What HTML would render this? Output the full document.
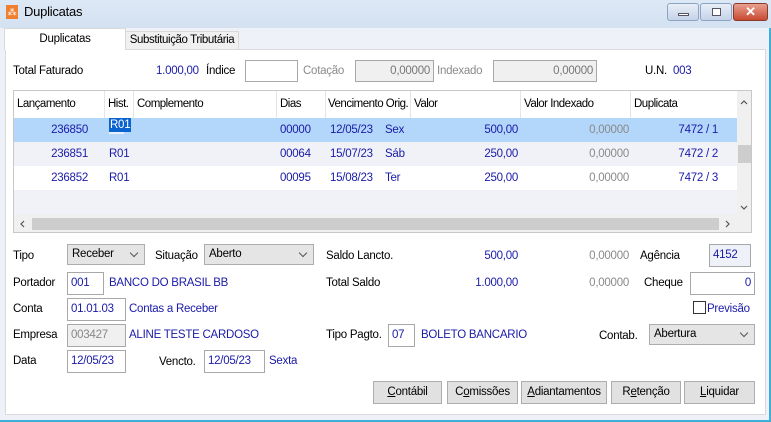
<!DOCTYPE html>
<html><head><meta charset="utf-8"><style>
*{margin:0;padding:0;box-sizing:border-box}
body{width:771px;height:422px;overflow:hidden;background:#eef2f8;font-family:"Liberation Sans",sans-serif;font-size:11.5px;letter-spacing:-0.25px;color:#000;position:relative}
.a{position:absolute;white-space:nowrap;line-height:14px}
.b{color:#1a1aa8}
.g{color:#8a8a8a}
.box{position:absolute;border:1px solid #a8a8a8;background:#fff;line-height:20px;padding:0 3px;color:#1a1aa8}
.gr{background:#f0f0f0}
.sel{position:absolute;border:1px solid #adadad;background:#e5e5e5;line-height:18px;padding:0 4px}
.sel::after{content:"";position:absolute;right:7px;top:5px;width:5px;height:5px;border-right:1px solid #555;border-bottom:1px solid #555;transform:rotate(45deg)}
.btn{position:absolute;top:381px;height:23px;border:1px solid #adadad;background:#e1e1e1;text-align:center;line-height:21px}
.r{text-align:right}
.hd{position:absolute;top:91px;height:27px;border-right:1px solid #e5e5e5;line-height:27px;padding-left:3px;letter-spacing:-0.5px;overflow:hidden}
</style></head><body>
<div class="a" style="left:0;top:0;width:771px;height:28px;background:linear-gradient(#dde8f5,#d3e1f1)"></div>
<div class="a" style="left:6px;top:5px;width:12px;height:14px;background:#f08030;color:#fff;font-size:9px;line-height:14px;text-align:center">⁂</div>
<div class="a" style="left:24px;top:5px;font-size:13px">Duplicatas</div>
<div class="a" style="left:667px;top:3px;width:32px;height:18px;border:1px solid #8da4c4;border-radius:3px;background:linear-gradient(#e8eef7,#c5d4e8)"><div style="position:absolute;left:10px;top:9px;width:11px;height:3px;background:#fff;border:1px solid #556"></div></div>
<div class="a" style="left:700px;top:3px;width:32px;height:18px;border:1px solid #8da4c4;border-radius:3px;background:linear-gradient(#e8eef7,#c5d4e8)"><div style="position:absolute;left:11px;top:4px;width:9px;height:8px;border:1px solid #556;background:#fff"></div></div>
<div class="a" style="left:733px;top:3px;width:35px;height:18px;border:1px solid #8a3a2a;border-radius:3px;background:linear-gradient(#e8a090,#c84a30);color:#fff;font-weight:bold;text-align:center;font-size:13px;line-height:16px">✕</div>
<div class="a" style="left:5px;top:49px;width:761px;height:366px;background:#fff;border:1px solid #d9d9d9"></div>
<div class="a" style="left:125px;top:31px;width:114px;height:19px;background:#f0f0f0;border:1px solid #d9d9d9;text-align:center;line-height:17px;letter-spacing:-0.4px">Substituição Tributária</div>
<div class="a" style="left:4px;top:28px;width:122px;height:22px;background:#fff;border:1px solid #d9d9d9;border-bottom:none;text-align:center;line-height:20px">Duplicatas</div>
<div class="a" style="left:13px;top:64px">Total Faturado</div>
<div class="a b" style="left:156px;top:64px">1.000,00</div>
<div class="a" style="left:206px;top:64px">Índice</div>
<div class="box" style="left:245px;top:60px;width:53px;height:22px"></div>
<div class="a g" style="left:303px;top:64px">Cotação</div>
<div class="box gr r" style="left:355px;top:60px;width:79px;height:22px;color:#777">0,00000</div>
<div class="a g" style="left:437px;top:64px">Indexado</div>
<div class="box gr r" style="left:493px;top:60px;width:104px;height:22px;color:#777">0,00000</div>
<div class="a" style="left:645px;top:64px">U.N.</div>
<div class="a b" style="left:673px;top:64px">003</div>
<div class="a" style="left:13px;top:90px;width:739px;height:143px;border:1px solid #c8c8c8;background:#fff"></div>
<div class="hd" style="left:14px;width:91px">Lançamento</div>
<div class="hd" style="left:105px;width:29px">Hist.</div>
<div class="hd" style="left:134px;width:143px">Complemento</div>
<div class="hd" style="left:277px;width:49px">Dias</div>
<div class="hd" style="left:326px;width:85px;padding-left:2px">Vencimento Orig.</div>
<div class="hd" style="left:411px;width:110px">Valor</div>
<div class="hd" style="left:521px;width:110px">Valor Indexado</div>
<div class="hd" style="left:631px;width:106px;border:none">Duplicata</div>
<div class="a" style="left:14px;top:118px;width:723px;height:24px;background:#b3d7fa"></div>
<div class="a" style="left:14px;top:142px;width:723px;height:24px;background:#f1f2f8"></div>
<div class="a" style="left:14px;top:190px;width:723px;height:24px;background:#f1f2f8"></div>
<div class="a" style="left:109px;top:118px;width:15px;height:16px;background:#e8f0fb"></div>
<div class="a" style="left:109px;top:118px;background:#0a64d0;color:#fff;padding:0 1px">R01</div>
<div class="a b" style="left:280px;top:123px">00000</div><div class="a b" style="left:330px;top:123px">12/05/23</div><div class="a b" style="left:385px;top:123px">Sex</div>
<div class="a b r" style="left:30px;width:58px;top:123px">236850</div><div class="a b r" style="left:430px;width:88px;top:123px">500,00</div><div class="a g r" style="left:540px;width:89px;top:123px">0,00000</div><div class="a b r" style="left:640px;width:78px;top:123px">7472 / 1</div>
<div class="a b r" style="left:30px;width:58px;top:147px">236851</div><div class="a b" style="left:109px;top:147px">R01</div><div class="a b" style="left:280px;top:147px">00064</div><div class="a b" style="left:330px;top:147px">15/07/23</div><div class="a b" style="left:385px;top:147px">Sáb</div><div class="a b r" style="left:430px;width:88px;top:147px">250,00</div><div class="a g r" style="left:540px;width:89px;top:147px">0,00000</div><div class="a b r" style="left:640px;width:78px;top:147px">7472 / 2</div>
<div class="a b r" style="left:30px;width:58px;top:171px">236852</div><div class="a b" style="left:109px;top:171px">R01</div><div class="a b" style="left:280px;top:171px">00095</div><div class="a b" style="left:330px;top:171px">15/08/23</div><div class="a b" style="left:385px;top:171px">Ter</div><div class="a b r" style="left:430px;width:88px;top:171px">250,00</div><div class="a g r" style="left:540px;width:89px;top:171px">0,00000</div><div class="a b r" style="left:640px;width:78px;top:171px">7472 / 3</div>
<div class="a" style="left:737px;top:91px;width:14px;height:123px;background:#f0f0f0"></div>
<div class="a" style="left:738px;top:145px;width:13px;height:18px;background:#cdcdcd"></div>
<svg class="a" style="left:739px;top:98px" width="10" height="8"><path d="M2 6 L5 3 L8 6" fill="none" stroke="#555" stroke-width="1.2"/></svg>
<svg class="a" style="left:739px;top:204px" width="10" height="8"><path d="M2 2 L5 5 L8 2" fill="none" stroke="#555" stroke-width="1.2"/></svg>
<div class="a" style="left:14px;top:214px;width:737px;height:18px;background:#f0f0f0"></div>
<div class="a" style="left:32px;top:218px;width:687px;height:12px;background:#cdcdcd"></div>
<svg class="a" style="left:18px;top:219px" width="8" height="10"><path d="M6 2 L3 5 L6 8" fill="none" stroke="#555" stroke-width="1.2"/></svg>
<svg class="a" style="left:724px;top:219px" width="8" height="10"><path d="M2 2 L5 5 L2 8" fill="none" stroke="#555" stroke-width="1.2"/></svg>
<div class="a" style="left:13px;top:249px">Tipo</div>
<div class="sel" style="left:67px;top:244px;width:78px;height:21px">Receber</div>
<div class="a" style="left:155px;top:249px">Situação</div>
<div class="sel" style="left:204px;top:244px;width:110px;height:21px">Aberto</div>
<div class="a" style="left:326px;top:249px">Saldo Lancto.</div>
<div class="a b r" style="left:430px;width:88px;top:249px">500,00</div>
<div class="a g r" style="left:540px;width:89px;top:249px">0,00000</div>
<div class="a" style="left:640px;top:249px">Agência</div>
<div class="box" style="left:709px;top:244px;width:42px;height:23px;background:#eef1f8;line-height:21px">4152</div>
<div class="a" style="left:13px;top:276px">Portador</div>
<div class="box" style="left:67px;top:272px;width:37px;height:23px">001</div>
<div class="a b" style="left:109px;top:276px">BANCO DO BRASIL BB</div>
<div class="a" style="left:326px;top:276px">Total Saldo</div>
<div class="a b r" style="left:430px;width:88px;top:276px">1.000,00</div>
<div class="a g r" style="left:540px;width:89px;top:276px">0,00000</div>
<div class="a" style="left:644px;top:276px">Cheque</div>
<div class="box r" style="left:690px;top:272px;width:65px;height:23px">0</div>
<div class="a" style="left:13px;top:302px">Conta</div>
<div class="box" style="left:67px;top:298px;width:59px;height:23px">01.01.03</div>
<div class="a b" style="left:129px;top:302px">Contas a Receber</div>
<div class="a" style="left:693px;top:301px;width:13px;height:13px;border:1px solid #333;background:#fff"></div>
<div class="a b" style="left:707px;top:302px">Previsão</div>
<div class="a" style="left:13px;top:328px">Empresa</div>
<div class="box gr" style="left:67px;top:324px;width:59px;height:23px;color:#888">003427</div>
<div class="a b" style="left:129px;top:328px">ALINE TESTE CARDOSO</div>
<div class="a" style="left:326px;top:328px">Tipo Pagto.</div>
<div class="box" style="left:388px;top:324px;width:27px;height:23px">07</div>
<div class="a b" style="left:421px;top:328px">BOLETO BANCARIO</div>
<div class="a" style="left:599px;top:329px">Contab.</div>
<div class="sel" style="left:649px;top:324px;width:106px;height:21px">Abertura</div>
<div class="a" style="left:13px;top:354px">Data</div>
<div class="box" style="left:67px;top:350px;width:59px;height:23px">12/05/23</div>
<div class="a" style="left:159px;top:355px">Vencto.</div>
<div class="box" style="left:204px;top:350px;width:61px;height:23px">12/05/23</div>
<div class="a b" style="left:269px;top:354px">Sexta</div>
<div class="btn" style="left:373px;width:69px"><u>C</u>ontábil</div>
<div class="btn" style="left:447px;width:71px">C<u>o</u>missões</div>
<div class="btn" style="left:521px;width:86px"><u>A</u>diantamentos</div>
<div class="btn" style="left:611px;width:70px">R<u>e</u>tenção</div>
<div class="btn" style="left:684px;width:71px"><u>L</u>iquidar</div>
<div class="a" style="left:0;top:420px;width:771px;height:2px;background:#3cb0d8"></div>
<div class="a" style="left:769px;top:28px;width:2px;height:394px;background:#3cb0d8"></div>
</body></html>
